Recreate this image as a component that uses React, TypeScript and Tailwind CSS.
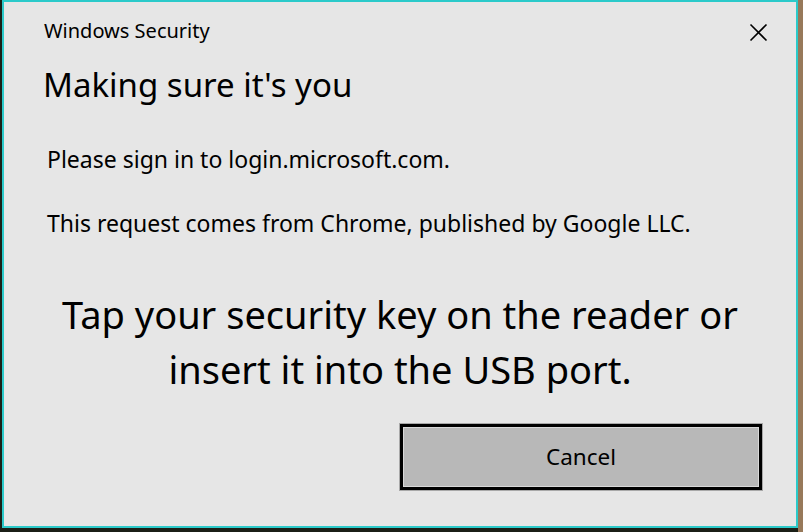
import React from 'react';

const font = { fontFamily: '"Noto Sans", "Open Sans", sans-serif' };

export default function App() {
  return (
    <div className="w-[803px] h-[532px] bg-[#1b1f17] flex overflow-hidden" style={font}>
      <div className="w-[2px] shrink-0" />
      <div className="w-[796px] h-[528px] shrink-0 border-2 border-[#2bcaca] bg-[#e6e6e6] flex flex-col text-black">
        <div className="flex items-start justify-between pl-[40px] pr-[28px] pt-[15px] h-[43px]">
          <span className="text-[20px] leading-[28px]">Windows Security</span>
          <button className="mt-[6px] w-[19px] h-[19px] flex items-center justify-center">
            <svg width="19" height="19" viewBox="0 0 19 19">
              <path d="M1.5 1.5 L17.5 17.5 M17.5 1.5 L1.5 17.5" stroke="#000" strokeWidth="1.6" fill="none" />
            </svg>
          </button>
        </div>
        <h1 className="pl-[39px] mt-[20px] text-[33px] leading-[40px]">Making sure it's you</h1>
        <p className="pl-[43px] mt-[39px] text-[23px] leading-[30px]">Please sign in to login.microsoft.com.</p>
        <p className="pl-[43px] mt-[34px] text-[23px] leading-[30px]">This request comes from Chrome, published by Google LLC.</p>
        <div className="mt-[49px] text-center text-[38px] leading-[55px]">
          <div>Tap your security key on the reader or</div>
          <div>insert it into the USB port.</div>
        </div>
        <div className="flex justify-end pr-[33px] mt-[26px]">
          <button className="w-[364px] h-[68px] border border-[#a8a8a8] p-0">
            <div className="w-full h-full border-[3px] border-black">
              <div className="w-full h-full border border-[#d8d8d8] bg-[#b8b8b8] flex items-center justify-center text-[22.5px]">
                Cancel
              </div>
            </div>
          </button>
        </div>
      </div>
      <div className="flex-1 bg-[#97795a]" />
    </div>
  );
}
